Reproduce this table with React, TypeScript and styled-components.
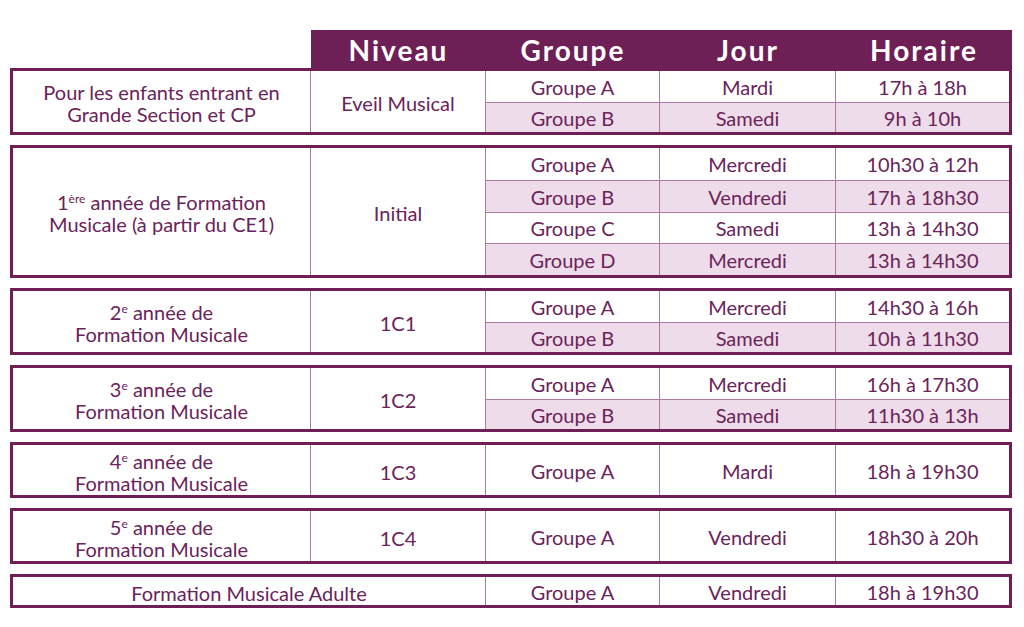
import React from "react";
import styled, { createGlobalStyle } from "styled-components";

const GlobalStyle = createGlobalStyle`
  html, body { margin: 0; padding: 0; background: #ffffff; }
  body { font-family: "Lato", "Open Sans", sans-serif; }
`;

const DARK = "#6d1f56";
const LINE = "#ad7aa3";
const TINT = "#eedcea";
const TEXT = "#6b2359";

const Page = styled.div`
  width: 1002px;
  padding: 30px 0 0 10px;
  display: flex;
  flex-direction: column;
`;

const HeaderRow = styled.div`
  display: grid;
  grid-template-columns: 301px 175px 174px 176px 176px;
  height: 38px;
`;

const Blank = styled.div``;

const HeadCell = styled.div`
  background: ${DARK};
  color: #ffffff;
  font-family: "Lato", sans-serif;
  font-weight: 700;
  font-size: 28px;
  letter-spacing: 2px;
  display: flex;
  align-items: center;
  justify-content: center;
  padding-top: 2px;
  box-sizing: border-box;
`;

const Groups = styled.div`
  display: flex;
  flex-direction: column;
  gap: 10px;
`;

const GroupBox = styled.div<{ $h: number; $n: number }>`
  box-sizing: border-box;
  height: ${(p) => p.$h}px;
  border: 3px solid ${DARK};
  display: grid;
  grid-template-columns: 298px 175px 174px 176px 173px;
  grid-template-rows: repeat(${(p) => p.$n}, 1fr);
  color: ${TEXT};
  font-size: 20px;
`;

const SpanCell = styled.div<{ $wide?: boolean }>`
  grid-row: 1 / -1;
  grid-column: ${(p) => (p.$wide ? "1 / span 2" : "auto")};
  border-right: 1px solid ${LINE};
  display: flex;
  align-items: center;
  justify-content: center;
  text-align: center;
  line-height: 22px;
  box-sizing: border-box;
  padding-top: 3px;
`;

const Label = styled.span`
  display: block;
`;

const Cell = styled.div<{ $tint: boolean; $top: boolean; $last?: boolean }>`
  box-sizing: border-box;
  background: ${(p) => (p.$tint ? TINT : "#ffffff")};
  border-top: ${(p) => (p.$top ? `1px solid ${LINE}` : "none")};
  border-right: ${(p) => (p.$last ? "none" : `1px solid ${LINE}`)};
  display: flex;
  align-items: center;
  justify-content: center;
  white-space: nowrap;
  padding-top: 1px;
`;

const Sup = styled.sup`
  font-size: 12px;
  line-height: 0;
  vertical-align: 7px;
`;

type Row = [string, string, string];

type Group = {
  label: React.ReactNode;
  niveau?: string;
  h: number;
  rows: Row[];
};

const groups: Group[] = [
  {
    label: (
      <>
        Pour les enfants entrant en
        <br />
        Grande Section et CP
      </>
    ),
    niveau: "Eveil Musical",
    h: 67,
    rows: [
      ["Groupe A", "Mardi", "17h à 18h"],
      ["Groupe B", "Samedi", "9h à 10h"],
    ],
  },
  {
    label: (
      <>
        1<Sup>ère</Sup> année de Formation
        <br />
        Musicale (à partir du CE1)
      </>
    ),
    niveau: "Initial",
    h: 133,
    rows: [
      ["Groupe A", "Mercredi", "10h30 à 12h"],
      ["Groupe B", "Vendredi", "17h à 18h30"],
      ["Groupe C", "Samedi", "13h à 14h30"],
      ["Groupe D", "Mercredi", "13h à 14h30"],
    ],
  },
  {
    label: (
      <>
        2<Sup>e</Sup> année de
        <br />
        Formation Musicale
      </>
    ),
    niveau: "1C1",
    h: 67,
    rows: [
      ["Groupe A", "Mercredi", "14h30 à 16h"],
      ["Groupe B", "Samedi", "10h à 11h30"],
    ],
  },
  {
    label: (
      <>
        3<Sup>e</Sup> année de
        <br />
        Formation Musicale
      </>
    ),
    niveau: "1C2",
    h: 67,
    rows: [
      ["Groupe A", "Mercredi", "16h à 17h30"],
      ["Groupe B", "Samedi", "11h30 à 13h"],
    ],
  },
  {
    label: (
      <>
        4<Sup>e</Sup> année de
        <br />
        Formation Musicale
      </>
    ),
    niveau: "1C3",
    h: 56,
    rows: [["Groupe A", "Mardi", "18h à 19h30"]],
  },
  {
    label: (
      <>
        5<Sup>e</Sup> année de
        <br />
        Formation Musicale
      </>
    ),
    niveau: "1C4",
    h: 56,
    rows: [["Groupe A", "Vendredi", "18h30 à 20h"]],
  },
  {
    label: "Formation Musicale Adulte",
    h: 34,
    rows: [["Groupe A", "Vendredi", "18h à 19h30"]],
  },
];

export default function App() {
  return (
    <>
      <GlobalStyle />
      <Page>
        <HeaderRow>
          <Blank />
          <HeadCell>Niveau</HeadCell>
          <HeadCell>Groupe</HeadCell>
          <HeadCell>Jour</HeadCell>
          <HeadCell>Horaire</HeadCell>
        </HeaderRow>
        <Groups>
          {groups.map((g, gi) => (
            <GroupBox key={gi} $h={g.h} $n={g.rows.length}>
              <SpanCell $wide={!g.niveau}>
                <Label>{g.label}</Label>
              </SpanCell>
              {g.niveau && (
                <SpanCell>
                  <Label>{g.niveau}</Label>
                </SpanCell>
              )}
              {g.rows.map((r, ri) => {
                const tint = ri % 2 === 1;
                const top = ri > 0;
                return (
                  <React.Fragment key={ri}>
                    <Cell $tint={tint} $top={top}>{r[0]}</Cell>
                    <Cell $tint={tint} $top={top}>{r[1]}</Cell>
                    <Cell $tint={tint} $top={top} $last>{r[2]}</Cell>
                  </React.Fragment>
                );
              })}
            </GroupBox>
          ))}
        </Groups>
      </Page>
    </>
  );
}
